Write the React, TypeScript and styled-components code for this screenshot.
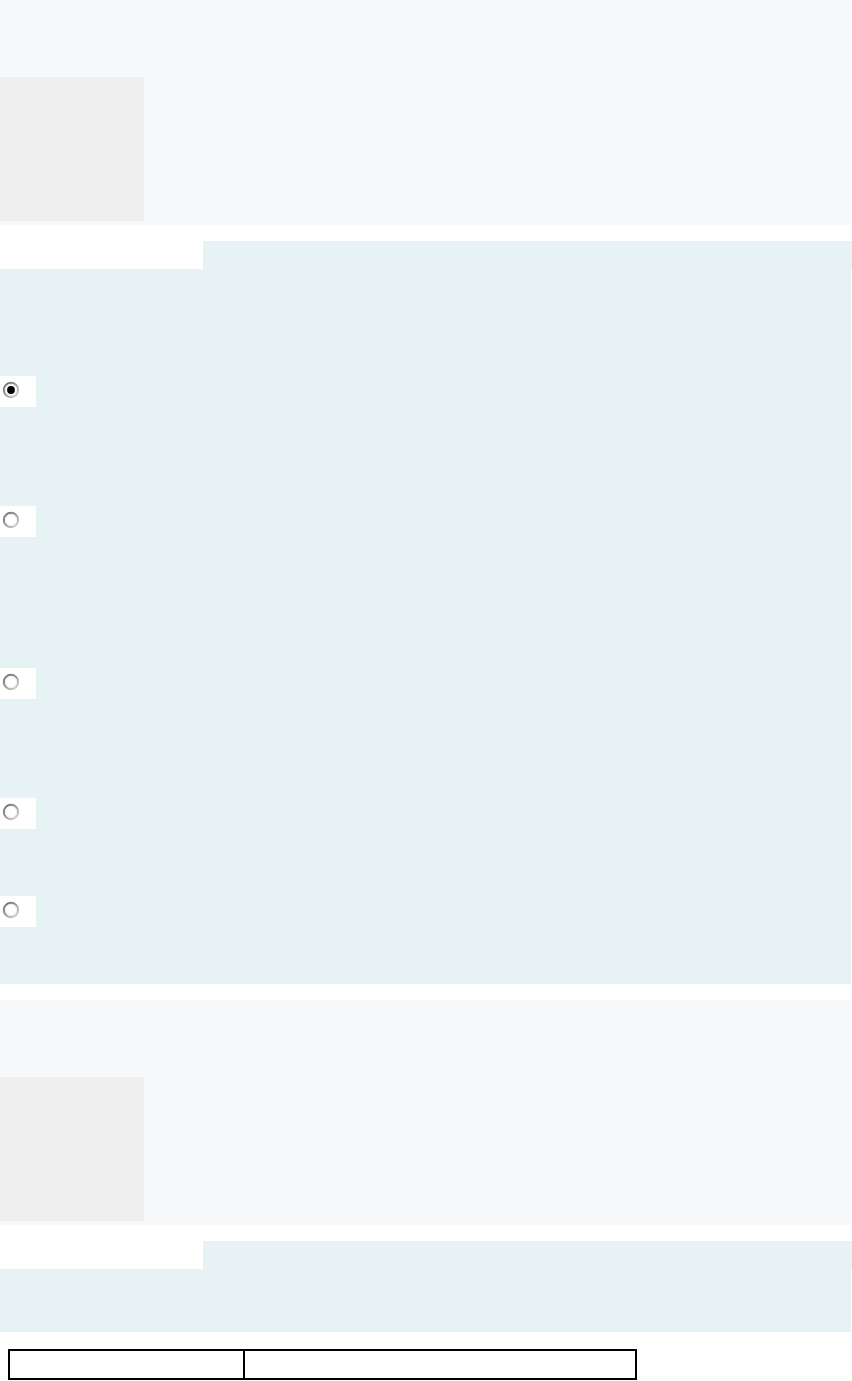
import styled, { createGlobalStyle } from "styled-components";

const GlobalStyle = createGlobalStyle`
  body {
    margin: 0;
    background: #ffffff;
    font-family: "Liberation Sans", Arial, sans-serif;
  }
`;

const Page = styled.div`
  width: 852px;
  display: flex;
  flex-direction: column;
`;

const Info = styled.div`
  width: 851px;
  height: 225px;
  box-sizing: border-box;
  padding-top: 77px;
  background: #f7f8fa;
  margin-bottom: 16px;
`;

const InfoThumb = styled.div`
  width: 144px;
  height: 144px;
  background: #efefef;
`;

const TabRow = styled.div`
  display: flex;
  height: 28px;
`;

const TabSpacer = styled.div`
  width: 203px;
  background: #ffffff;
`;

const Tab = styled.div`
  flex: 1;
  background: #e6f2f4;
`;

const Formulation = styled.div<{ $height: number; $padTop?: number }>`
  width: 851px;
  height: ${(p) => p.$height}px;
  box-sizing: border-box;
  background: #e6f2f4;
  padding-top: ${(p) => p.$padTop ?? 0}px;
  display: flex;
  flex-direction: column;
  margin-bottom: 16px;
`;

const Answer = styled.div<{ $space: number }>`
  height: ${(p) => p.$space}px;
  display: flex;
  align-items: flex-start;
`;

const RadioBox = styled.div`
  width: 36px;
  height: 31px;
  background: #ffffff;
  display: flex;
  align-items: flex-start;
  padding: 5px 0 0 2px;
  box-sizing: border-box;
`;

const Table = styled.table`
  margin: 1px 0 0 8px;
  width: 629px;
  height: 31px;
  border-collapse: collapse;
  td {
    border: 2px solid #000;
    padding: 0;
  }
`;

function Radio({ checked }: { checked?: boolean }) {
  const id = checked ? "rg1" : "rg0";
  return (
    <svg width="18" height="18" viewBox="0 0 18 18">
      <defs>
        <linearGradient id={id} x1="0" y1="0" x2="1" y2="1">
          <stop offset="0" stopColor="#6e6e6e" />
          <stop offset="0.5" stopColor="#9a9a9a" />
          <stop offset="1" stopColor="#dcdcdc" />
        </linearGradient>
      </defs>
      <circle cx="9" cy="9" r="7.2" fill="#fff" stroke={`url(#${id})`} strokeWidth="2" />
      <circle cx="9" cy="9" r="5.6" fill="none" stroke="#ececec" strokeWidth="1" />
      {checked && <circle cx="9" cy="9" r="3.9" fill="#000" />}
    </svg>
  );
}

const answers = [
  { space: 130, checked: true },
  { space: 162 },
  { space: 130 },
  { space: 98 },
  { space: 88 },
];

export default function App() {
  return (
    <>
      <GlobalStyle />
      <Page>
        <Info>
          <InfoThumb />
        </Info>
        <TabRow>
          <TabSpacer />
          <Tab />
        </TabRow>
        <Formulation $height={715} $padTop={107}>
          {answers.map((a, i) => (
            <Answer key={i} $space={a.space}>
              <RadioBox>
                <Radio checked={a.checked} />
              </RadioBox>
            </Answer>
          ))}
        </Formulation>
        <Info>
          <InfoThumb />
        </Info>
        <TabRow>
          <TabSpacer />
          <Tab />
        </TabRow>
        <Formulation $height={63} />
        <Table>
          <tbody>
            <tr>
              <td style={{ width: 233 }} />
              <td />
            </tr>
          </tbody>
        </Table>
      </Page>
    </>
  );
}
